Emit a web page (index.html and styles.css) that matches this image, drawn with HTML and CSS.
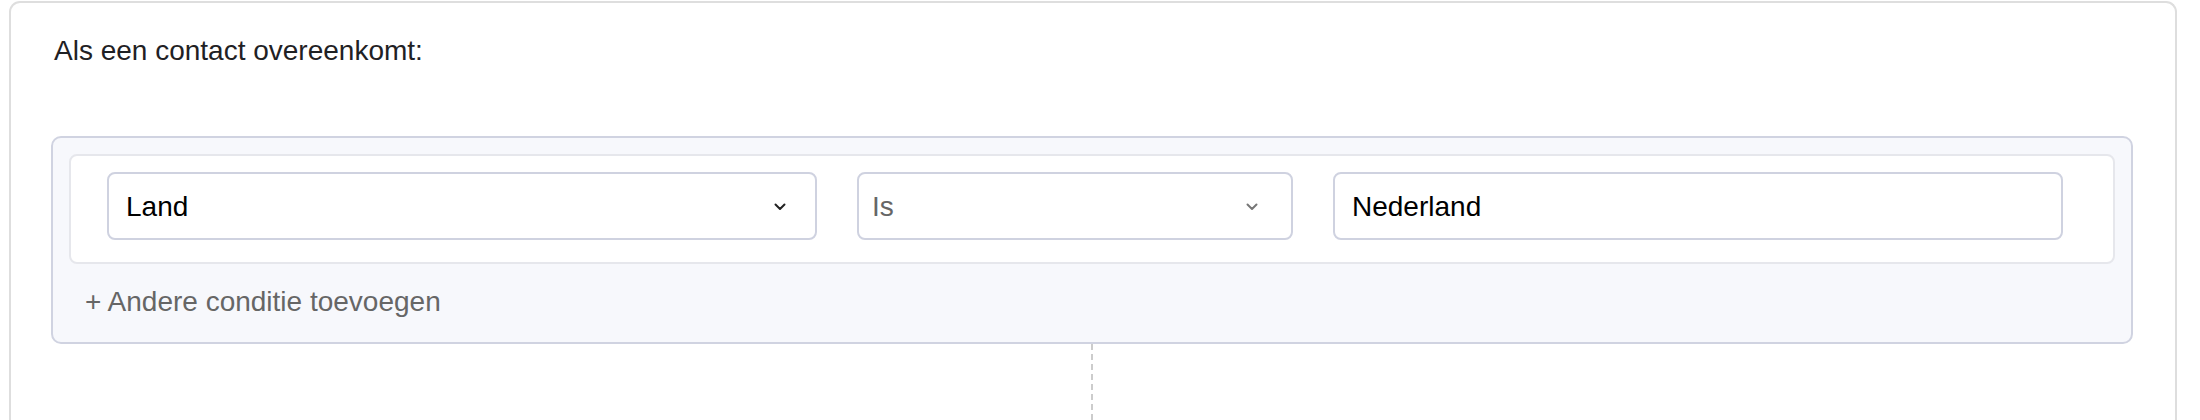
FILE: index.html
```html
<!DOCTYPE html>
<html lang="nl">
<head>
    <meta charset="UTF-8">
    <meta name="viewport" content="width=device-width, initial-scale=1.0">
    <title>Condities</title>
    <link rel="stylesheet" href="styles.css">
</head>
<body>
    <div class="card">
        <p class="intro">Als een contact overeenkomt:</p>

        <div class="group">
            <div class="condition">
                <div class="field select">
                    <span class="value">Land</span>
                    <svg class="chevron" width="14" height="8" viewBox="0 0 14 8"><path d="M2.5 1.5 L7 6 L11.5 1.5" /></svg>
                </div>
                <div class="field select muted">
                    <span class="value">Is</span>
                    <svg class="chevron" width="14" height="8" viewBox="0 0 14 8"><path d="M2.5 1.5 L7 6 L11.5 1.5" /></svg>
                </div>
                <div class="field">
                    <span class="value">Nederland</span>
                </div>
            </div>
            <div class="add-condition">+ Andere conditie toevoegen</div>
        </div>

        <div class="connector"></div>
    </div>
</body>
</html>
```

FILE: styles.css
```css
body {
    margin: 0;
    padding: 1px 23px 0 9px;
    background-color: #ffffff;
    font-family: "Liberation Sans", Arial, sans-serif;
    font-size: 28px;
    line-height: 32px;
    color: #222222;
}

.card {
    border: 2px solid #dedede;
    border-bottom: none;
    border-radius: 11px 11px 0 0;
    padding: 32px 42px 0 40px;
    height: 420px;
    box-sizing: border-box;
}

.intro {
    margin: 0 0 69px 3px;
    color: #1f2124;
}

.group {
    background-color: #f7f8fc;
    border: 2px solid #d0d3e1;
    border-radius: 10px;
    padding: 16px 16px 24px;
}

.condition {
    display: grid;
    grid-template-columns: 710fr 436fr 730fr;
    column-gap: 40px;
    background-color: #ffffff;
    border: 2px solid #e6e7ec;
    border-radius: 8px;
    padding: 16px 50px 22px 36px;
}

.field {
    display: flex;
    align-items: center;
    justify-content: space-between;
    height: 68px;
    box-sizing: border-box;
    border: 2px solid #cfd2e0;
    border-radius: 8px;
    background-color: #ffffff;
    padding: 2px 28px 0 17px;
    color: #000000;
}

.chevron {
    flex: none;
}

.chevron path {
    fill: none;
    stroke: #222222;
    stroke-width: 2;
    stroke-linecap: round;
    stroke-linejoin: round;
}

.muted {
    color: #666666;
    padding-left: 13px;
    padding-right: 32px;
}

.muted .chevron path {
    stroke: #777777;
}

.add-condition {
    margin-top: 22px;
    padding-left: 16px;
    color: #666666;
}

.connector {
    width: 2px;
    height: 80px;
    margin: 0 auto;
    background: repeating-linear-gradient(to bottom, #cccccc 0 6px, transparent 6px 10px);
}
```
